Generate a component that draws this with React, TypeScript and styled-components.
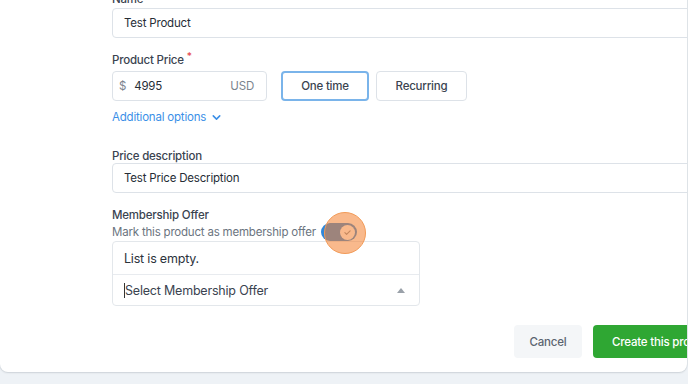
import React from "react";
import styled, { createGlobalStyle } from "styled-components";
import { ChevronDown } from "lucide-react";

const Global = createGlobalStyle`
  html, body { margin: 0; padding: 0; }
  body {
    background: #eef2f6;
    font-family: Inter, "Liberation Sans", Arial, sans-serif;
    letter-spacing: -0.2px;
    width: 688px;
    height: 384px;
    overflow: hidden;
  }
`;

const Card = styled.div`
  box-sizing: border-box;
  width: 687px;
  height: 381px;
  margin-top: -9px;
  background: #fff;
  border-radius: 0 0 8px 8px;
  box-shadow: 0 1px 2px rgba(30, 40, 60, 0.12), 0 0 0 1px rgba(30, 40, 60, 0.04);
  padding: 0 0 0 112px;
  overflow: hidden;
  position: relative;
`;

const Field = styled.div<{ $mt: number }>`
  margin-top: ${(p) => p.$mt}px;
  display: flex;
  flex-direction: column;
`;

const Label = styled.div<{ $mb: number }>`
  font-size: 11.5px;
  line-height: 16px;
  color: #3a4350;
  font-weight: 500;
  margin-bottom: ${(p) => p.$mb}px;
`;

const Req = styled.span`
  color: #e5484d;
  font-size: 10px;
  margin-left: 3px;
  position: relative;
  top: -4px;
  line-height: 0;
`;

const TextInput = styled.div<{ $w: number }>`
  box-sizing: border-box;
  width: ${(p) => p.$w}px;
  height: 30px;
  border: 1px solid #dde2e8;
  border-radius: 4px;
  display: flex;
  align-items: center;
  padding: 0 11px;
  font-size: 11.5px;
  color: #262d36;
`;

const Row = styled.div`
  display: flex;
  align-items: center;
`;

const Prefix = styled.span`
  color: #7b848e;
  margin-right: 8px;
  margin-left: -5px;
`;

const Value = styled.span`
  flex: 1;
`;

const Suffix = styled.span`
  color: #7b848e;
  margin-right: 1px;
`;

const Choice = styled.button<{ $active?: boolean; $w: number; $ml: number }>`
  box-sizing: border-box;
  width: ${(p) => p.$w}px;
  height: 30px;
  margin-left: ${(p) => p.$ml}px;
  background: #fff;
  border: ${(p) => (p.$active ? "2px solid #7ab4ea" : "1px solid #dde2e8")};
  border-radius: 4px;
  font-family: inherit;
  letter-spacing: inherit;
  font-size: 11.5px;
  font-weight: 500;
  color: #3a4350;
  cursor: pointer;
  padding: 0;
`;

const Link = styled.div`
  margin-top: 8px;
  display: flex;
  align-items: center;
  gap: 4px;
  color: #3b8fe7;
  font-size: 11.5px;
  line-height: 16px;
`;

const Helper = styled.div`
  display: flex;
  align-items: center;
  gap: 5px;
  height: 18px;
  font-size: 11.5px;
  line-height: 16px;
  color: #6b7480;
`;

const ToggleWrap = styled.div`
  position: relative;
  width: 36px;
  height: 18px;
`;

const Track = styled.div`
  width: 36px;
  height: 18px;
  border-radius: 9px;
  background: #2e87db;
  display: flex;
  align-items: center;
  justify-content: flex-end;
  padding: 0 2px;
  box-sizing: border-box;
`;

const Knob = styled.div`
  width: 15px;
  height: 15px;
  border-radius: 50%;
  background: #fff;
  display: flex;
  align-items: center;
  justify-content: center;
`;

const ClickMark = styled.div`
  position: absolute;
  left: 3px;
  top: -11px;
  width: 42px;
  height: 42px;
  border-radius: 50%;
  background: rgba(245, 130, 50, 0.56);
  border: 1.5px solid #f29a57;
  box-sizing: border-box;
  pointer-events: none;
`;

const Dropdown = styled.div`
  box-sizing: border-box;
  width: 308px;
  border: 1px solid #e3e7eb;
  border-radius: 4px;
  font-size: 12.5px;
  color: #2c333c;
`;

const DropRow = styled.div<{ $h: number; $divider?: boolean }>`
  height: ${(p) => p.$h}px;
  display: flex;
  align-items: center;
  padding: 0 11px;
  border-bottom: ${(p) => (p.$divider ? "1px solid #e8ebef" : "none")};
`;

const Caret = styled.span`
  display: inline-block;
  width: 1px;
  height: 15px;
  background: #333;
`;

const Placeholder = styled.span`
  flex: 1;
  color: #3a4350;
`;

const Arrow = styled.span`
  width: 0;
  height: 0;
  border-left: 4px solid transparent;
  border-right: 4px solid transparent;
  border-bottom: 5px solid #9aa1a9;
  margin-right: 3px;
`;

const Footer = styled.div`
  display: flex;
  justify-content: flex-end;
  gap: 11px;
  margin-top: 19px;
  margin-right: -26px;
`;

const Button = styled.button<{ $primary?: boolean; $w: number }>`
  width: ${(p) => p.$w}px;
  height: 33px;
  border: none;
  border-radius: 4px;
  font-family: inherit;
  letter-spacing: inherit;
  font-size: 11.5px;
  font-weight: 500;
  background: ${(p) => (p.$primary ? "#2fa733" : "#f4f6f8")};
  color: ${(p) => (p.$primary ? "#fff" : "#5b6470")};
  text-align: ${(p) => (p.$primary ? "left" : "center")};
  padding: ${(p) => (p.$primary ? "0 0 0 19px" : "0")};
  white-space: nowrap;
`;

export default function App() {
  return (
    <>
      <Global />
      <Card>
        <Field $mt={0}>
          <Label $mb={1}>Name</Label>
          <TextInput $w={600}>Test Product</TextInput>
        </Field>
        <Field $mt={14}>
          <Label $mb={3}>
            Product Price<Req>*</Req>
          </Label>
          <Row>
            <TextInput $w={155}>
              <Prefix>$</Prefix>
              <Value>4995</Value>
              <Suffix>USD</Suffix>
            </TextInput>
            <Choice $active $w={88} $ml={14}>One time</Choice>
            <Choice $w={91} $ml={7}>Recurring</Choice>
          </Row>
          <Link>
            Additional options
            <ChevronDown size={13} strokeWidth={2.8} />
          </Link>
        </Field>
        <Field $mt={23}>
          <Label $mb={-1}>Price description</Label>
          <TextInput $w={600}>Test Price Description</TextInput>
        </Field>
        <Field $mt={14}>
          <Label $mb={0}>Membership Offer</Label>
          <Helper>
            Mark this product as membership offer
            <ToggleWrap>
              <Track>
                <Knob>
                  <svg width="9" height="9" viewBox="0 0 24 24" fill="none" stroke="#8a8f96" strokeWidth="3" strokeLinecap="round" strokeLinejoin="round">
                    <path d="M5 12.5l4.5 4.5L19 7.5" />
                  </svg>
                </Knob>
              </Track>
              <ClickMark />
            </ToggleWrap>
          </Helper>
          <Dropdown>
            <DropRow $h={32} $divider>List is empty.</DropRow>
            <DropRow $h={30}>
              <Caret />
              <Placeholder>Select Membership Offer</Placeholder>
              <Arrow />
            </DropRow>
          </Dropdown>
        </Field>
        <Footer>
          <Button $w={68}>Cancel</Button>
          <Button $primary $w={120}>Create this product</Button>
        </Footer>
      </Card>
    </>
  );
}
